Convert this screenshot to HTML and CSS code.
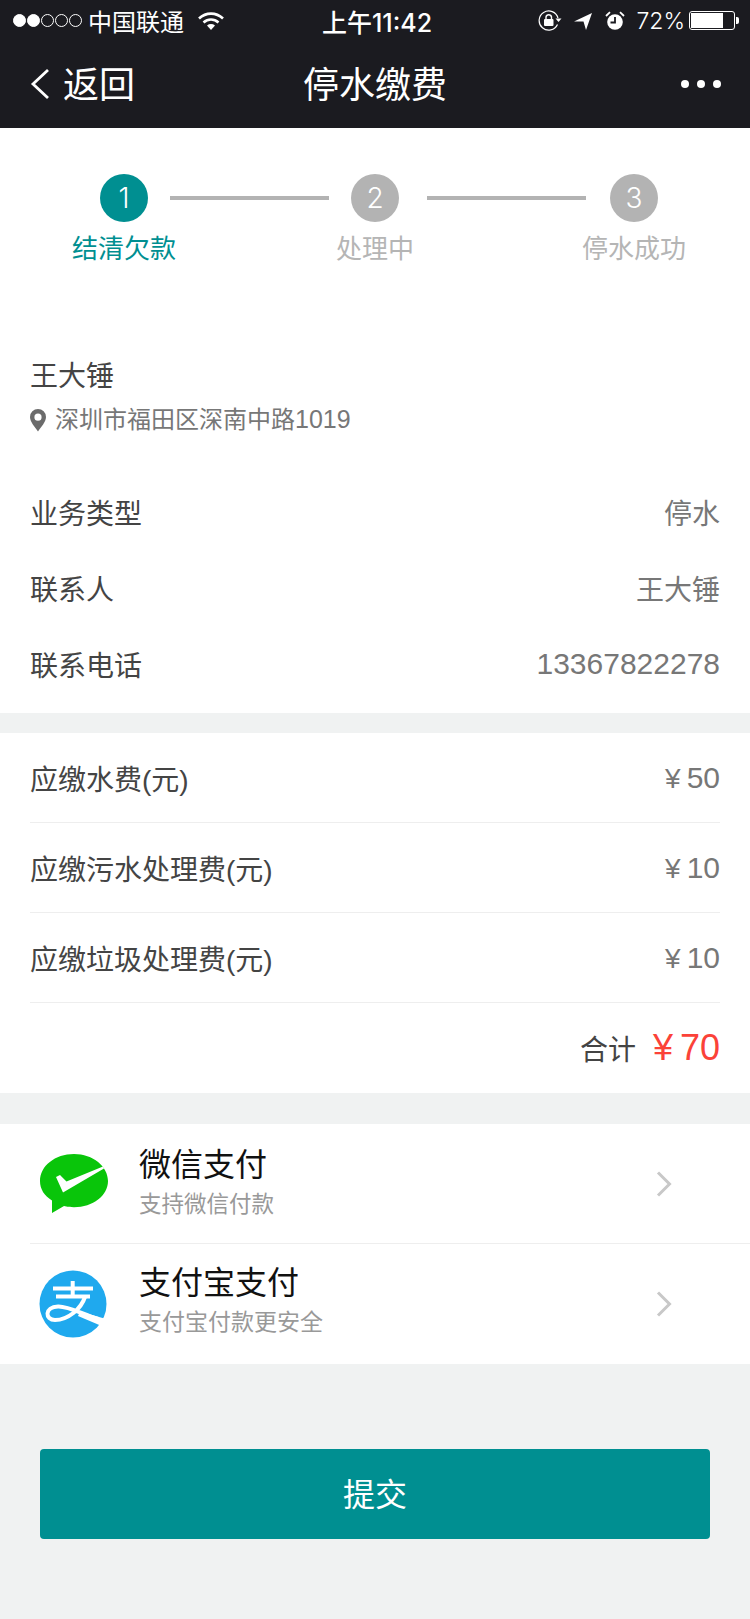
FILE: index.html
```html
<!DOCTYPE html>
<html lang="zh-CN">

<head>
    <meta charset="UTF-8">
    <meta name="viewport" content="width=device-width, initial-scale=1.0">
    <title>停水缴费</title>
    <link rel="stylesheet" href="styles.css">
</head>

<body>
    <div class="cabecera">
        <div class="estado">
            <div class="estado-izq">
                <span class="senal"><i class="lleno"></i><i class="lleno"></i><i></i><i></i><i></i></span>
                <span class="operador">中国联通</span>
                <svg class="wifi" width="26" height="20" viewBox="0 0 26 20">
                    <path d="M1 7.5C8 1 18 1 25 7.5" fill="none" stroke="#fff" stroke-width="2.6"/>
                    <path d="M5.5 11.5C10 7.5 16 7.5 20.5 11.5" fill="none" stroke="#fff" stroke-width="2.6"/>
                    <path d="M9 14.5C11.5 12.6 14.5 12.6 17 14.5L13 19z" fill="#fff"/>
                </svg>
            </div>
            <div class="hora">上午11:42</div>
            <div class="estado-der">
                <svg class="giro" width="24" height="22" viewBox="0 0 24 22">
                    <path d="M19.5 14.5A9.6 9.6 0 1 1 20 8" fill="none" stroke="#fff" stroke-width="1.2"/>
                    <path d="M17.5 8.5h6l-3 3.4z" fill="#fff"/>
                    <rect x="6" y="9" width="9.5" height="7" rx="1" fill="#fff"/>
                    <path d="M8 9V7a2.8 2.8 0 0 1 5.5 0v2" fill="none" stroke="#fff" stroke-width="1.4"/>
                </svg>
                <svg class="flecha" width="18" height="18" viewBox="0 0 18 18">
                    <path d="M0 9.5L18 1 12 18 9.5 9.5z" fill="#fff"/>
                </svg>
                <svg class="alarma" width="20" height="20" viewBox="0 0 20 20">
                    <circle cx="10" cy="11" r="7.8" fill="#fff"/>
                    <path d="M10 6v5.5H5.5" fill="none" stroke="#1b1b20" stroke-width="1.8"/>
                    <path d="M1 5L5 1.2M19 5L15 1.2" stroke="#fff" stroke-width="1.8"/>
                </svg>
                <span class="pct">72%</span>
                <span class="bateria"><span class="carga"></span></span>
                <span class="polo"></span>
            </div>
        </div>
        <div class="nav">
            <div class="volver">
                <svg width="20" height="32" viewBox="0 0 20 32">
                    <path d="M18 2L3 16l15 14" fill="none" stroke="#fff" stroke-width="2.8"/>
                </svg>
                <span class="nav-texto">返回</span>
            </div>
            <div class="titulo nav-texto">停水缴费</div>
            <div class="puntos"><i></i><i></i><i></i></div>
        </div>
    </div>

    <div class="bloque bloque-info">
        <div class="pasos">
            <div class="paso activo">
                <div class="circulo">1</div>
                <div class="paso-texto">结清欠款</div>
            </div>
            <div class="linea linea-a"></div>
            <div class="paso">
                <div class="circulo">2</div>
                <div class="paso-texto">处理中</div>
            </div>
            <div class="linea linea-b"></div>
            <div class="paso">
                <div class="circulo">3</div>
                <div class="paso-texto">停水成功</div>
            </div>
        </div>

        <div class="nombre">王大锤</div>
        <div class="direccion">
            <svg width="16" height="24" viewBox="0 0 16 24">
                <path fill-rule="evenodd" d="M8 1a8 8 0 0 1 8 8c0 5-5 10-8 14.5C5 19 0 14 0 9a8 8 0 0 1 8-8zm0 4.600a3.600 3.600 0 1 0 0 7.200 3.600 3.600 0 0 0 0-7.200z" fill="#6b6b6b"/>
            </svg>
            <span>深圳市福田区深南中路<span class="num-dir">1019</span></span>
        </div>

        <div class="fila-info"><span>业务类型</span><span class="valor">停水</span></div>
        <div class="fila-info"><span>联系人</span><span class="valor">王大锤</span></div>
        <div class="fila-info"><span>联系电话</span><span class="valor num">13367822278</span></div>
    </div>

    <div class="bloque bloque-pago">
        <div class="fila-pago"><span>应缴水费(元)</span><span class="valor">¥<b class="num">50</b></span></div>
        <div class="fila-pago"><span>应缴污水处理费(元)</span><span class="valor">¥<b class="num">10</b></span></div>
        <div class="fila-pago"><span>应缴垃圾处理费(元)</span><span class="valor">¥<b class="num">10</b></span></div>
        <div class="total"><span>合计</span><span class="total-num">¥<b>70</b></span></div>
    </div>

    <div class="bloque bloque-metodos">
        <div class="metodo">
            <svg class="metodo-icono icono-wx" width="68" height="62" viewBox="0 0 68 62">
                <path d="M34 1C15 1 0 13 0 28c0 8 4 14.5 12 19.5L12 60l12-7c3 .8 6.5 1.200 10 1.200 19 0 34-11.700 34-26.200S53 1 34 1z" fill="#09c50a"/>
                <path d="M16 24l4-2 6.500 6.500L63 13.500l1 2L23 39.500z" fill="#fff"/>
            </svg>
            <div class="metodo-textos textos-wx">
                <div class="metodo-nombre">微信支付</div>
                <div class="metodo-desc">支持微信付款</div>
            </div>
            <svg class="chevron" width="16" height="26" viewBox="0 0 16 26">
                <path d="M2 1.5L13.5 13 2 24.5" fill="none" stroke="#c8c8c8" stroke-width="3"/>
            </svg>
        </div>
        <div class="metodo">
            <svg class="metodo-icono" width="70" height="70" viewBox="0 0 70 70">
                <circle cx="35" cy="35" r="33.5" fill="#1fa9ee"/>
                <g fill="none" stroke="#fff" stroke-width="4">
                    <path d="M15 19.500h40M34.700 12v16M18 27.500h34"/>
                    <path d="M47 28C43 40 30 51 17 51 7 51 6 38 20 37.500 29 37 40 43 60 50"/>
                </g>
                <path d="M42 42.500l26 7.500-2 8-26-11z" fill="#fff"/>
            </svg>
            <div class="metodo-textos">
                <div class="metodo-nombre">支付宝支付</div>
                <div class="metodo-desc metodo-desc-ancha">支付宝付款更安全</div>
            </div>
            <svg class="chevron" width="16" height="26" viewBox="0 0 16 26">
                <path d="M2 1.5L13.5 13 2 24.5" fill="none" stroke="#c8c8c8" stroke-width="3"/>
            </svg>
        </div>
    </div>

    <button class="enviar">提交</button>
</body>

</html>
```

FILE: styles.css
```css
* {
    box-sizing: border-box;
}

body {
    margin: 0;
    height: 1619px;
    overflow: hidden;
    background-color: #f0f2f2;
    font-family: "Liberation Sans", "Noto Sans CJK SC", sans-serif;
    color: #444;
}

.cabecera {
    height: 128px;
    background-color: #1b1b20;
    color: #fff;
}

.estado {
    height: 41px;
    padding: 0 11px 0 13px;
    display: grid;
    grid-template-columns: 1fr auto 1fr;
    align-items: center;
    font-family: "Inter", "Noto Sans CJK SC", sans-serif;
}

.estado-izq, .estado-der {
    display: flex;
    align-items: center;
}

.estado-der {
    justify-content: flex-end;
}

.senal {
    display: flex;
    gap: 1px;
}

.senal i {
    width: 13px;
    height: 13px;
    border: 1px solid #fff;
    border-radius: 50%;
}

.senal i.lleno {
    background-color: #fff;
}

.operador {
    font-size: 24px;
    margin-left: 6px;
}

.wifi {
    margin-left: 14px;
}

.hora {
    font-size: 25px;
    font-weight: 500;
    margin-left: 2px;
}

.giro {
    margin-right: 12px;
}

.flecha {
    margin-right: 13px;
}

.alarma {
    margin-right: 11px;
}

.pct {
    font-size: 23px;
    font-weight: 300;
    margin-right: 4px;
}

.bateria {
    width: 46px;
    height: 19px;
    border: 1px solid #fff;
    border-radius: 3px;
    padding: 1px;
}

.carga {
    display: block;
    width: 32px;
    height: 15px;
    background-color: #fff;
}

.polo {
    width: 3px;
    height: 7px;
    background-color: #fff;
    margin-left: 1px;
    border-radius: 0 2px 2px 0;
}

.nav {
    height: 87px;
    padding: 0 30px 2px;
    display: grid;
    grid-template-columns: 1fr auto 1fr;
    align-items: center;
}

.volver {
    display: flex;
    align-items: center;
    font-size: 36px;
    gap: 13px;
}

.nav-texto {
    margin-bottom: 4px;
}

.titulo {
    font-size: 36px;
}

.puntos {
    display: flex;
    justify-content: flex-end;
    gap: 8px;
    margin-right: -1px;
}

.puntos i {
    width: 8px;
    height: 8px;
    border-radius: 50%;
    background-color: #fff;
}

.bloque {
    background-color: #fff;
}

.bloque-info {
    height: 585px;
    padding: 46px 30px 0;
}

.pasos {
    display: flex;
    align-items: flex-start;
    padding-left: 70px;
    height: 183px;
}

.paso {
    width: 48px;
    display: flex;
    flex-direction: column;
    align-items: center;
    color: #b5b5b5;
}

.circulo {
    width: 48px;
    height: 48px;
    border-radius: 50%;
    background-color: #b3b3b3;
    color: #fff;
    font-family: "Inter", sans-serif;
    font-size: 28px;
    font-weight: 300;
    display: flex;
    align-items: center;
    justify-content: center;
}

.paso-texto {
    font-size: 26px;
    line-height: 36px;
    margin-top: 9px;
    white-space: nowrap;
}

.activo {
    color: #008f91;
}

.activo .circulo {
    background-color: #008f91;
}

.linea {
    width: 159px;
    height: 4px;
    margin-top: 22px;
    background-color: #b3b3b3;
}

.linea-a {
    margin-left: 22px;
    margin-right: 22px;
}

.linea-b {
    margin-left: 28px;
    margin-right: 24px;
}

.nombre {
    font-size: 28px;
    line-height: 40px;
}

.direccion {
    display: flex;
    align-items: center;
    gap: 9px;
    font-size: 24px;
    line-height: 36px;
    color: #777;
    margin-top: 4px;
    margin-bottom: 36px;
}

.num-dir {
    font-size: 25px;
}

.fila-info {
    display: flex;
    justify-content: space-between;
    align-items: center;
    height: 76px;
    font-size: 28px;
}

.valor {
    color: #777;
}

.num {
    font-size: 30px;
    font-weight: 400;
}

.bloque-pago {
    margin-top: 20px;
    height: 360px;
    padding: 0 30px;
}

.fila-pago {
    display: flex;
    justify-content: space-between;
    align-items: center;
    height: 90px;
    font-size: 28px;
    border-bottom: 1px solid #eee;
}

.valor b {
    margin-left: 6px;
}

.total {
    display: flex;
    justify-content: flex-end;
    align-items: center;
    height: 90px;
    font-size: 28px;
}

.total-num {
    font-size: 36px;
    color: #fb4238;
    margin-left: 17px;
}

.total-num b {
    font-weight: 400;
    margin-left: 7px;
}

.bloque-metodos {
    margin-top: 31px;
    height: 240px;
    padding-left: 30px;
}

.metodo {
    height: 120px;
    display: flex;
    align-items: center;
    border-bottom: 1px solid #eee;
}

.metodo:last-child {
    border-bottom: 0;
}

.metodo-icono {
    margin-left: 8px;
    flex: none;
}

.icono-wx {
    margin-left: 10px;
}

.metodo-textos {
    margin-left: 31px;
    padding-bottom: 8px;
    flex: 1;
}

.textos-wx {
    padding-bottom: 3px;
}

.metodo-nombre {
    font-size: 32px;
    line-height: 44px;
    color: #111;
}

.metodo-desc {
    font-size: 22.5px;
    line-height: 35px;
    color: #999;
}

.metodo-desc-ancha {
    font-size: 23px;
}

.chevron {
    margin-right: 78px;
}

.enviar {
    display: block;
    width: 670px;
    height: 90px;
    margin: 85px 0 0 40px;
    padding-bottom: 6px;
    border: 0;
    border-radius: 4px;
    background-color: #008f91;
    color: #fff;
    font-family: inherit;
    font-size: 32px;
}
```
